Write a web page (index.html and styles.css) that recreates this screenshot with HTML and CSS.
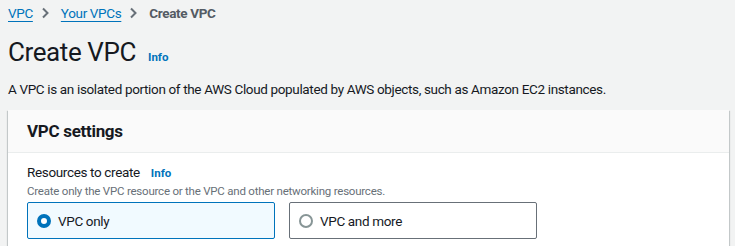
FILE: index.html
```html
<!DOCTYPE html>
<html>
<head>
<meta charset="utf-8">
<link rel="stylesheet" href="styles.css">
</head>
<body>
<nav class="crumbs">
  <a class="crumb-link" href="#">VPC</a>
  <svg class="chev" width="28" height="18" viewBox="0 0 28 18"><path d="M10 4.5l4.5 4.5-4.5 4.5" fill="none" stroke="#687078" stroke-width="2"/></svg>
  <a class="crumb-link" href="#">Your VPCs</a>
  <svg class="chev" width="28" height="18" viewBox="0 0 28 18"><path d="M10 4.5l4.5 4.5-4.5 4.5" fill="none" stroke="#687078" stroke-width="2"/></svg>
  <span class="crumb-current">Create VPC</span>
</nav>
<header class="page-head">
  <h1 class="title">Create VPC</h1>
  <a class="info" href="#">Info</a>
</header>
<p class="desc">A VPC is an isolated portion of the AWS Cloud populated by AWS objects, such as Amazon EC2 instances.</p>
<section class="panel">
  <div class="panel-head"><h2 class="panel-title">VPC settings</h2></div>
  <div class="panel-body">
    <div class="label-row"><span class="label">Resources to create</span><a class="info" href="#">Info</a></div>
    <div class="hint">Create only the VPC resource or the VPC and other networking resources.</div>
    <div class="tiles">
      <div class="tile tile-on"><span class="radio radio-on"></span><span>VPC only</span></div>
      <div class="tile"><span class="radio"></span><span>VPC and more</span></div>
    </div>
  </div>
</section>
</body>
</html>
```

FILE: styles.css
```css
html, body { margin: 0; padding: 0; }
body {
  background: #f2f3f3;
  font-family: Roboto, "Open Sans", sans-serif;
  color: #16191f;
  font-size: 13.5px;
  letter-spacing: -0.35px;
  padding: 0 6px 0 8px;
  overflow: hidden;
}
.crumbs {
  display: flex;
  align-items: center;
  height: 26px;
}
.crumb-link {
  color: #0073bb;
  text-decoration: underline;
  text-underline-offset: 3px;
}
.crumb-current { color: #545b64; font-weight: 700; }
.chev { flex: none; }
.page-head {
  display: flex;
  align-items: baseline;
  gap: 12px;
  margin-top: 10px;
  height: 32px;
}
.title {
  margin: 0;
  font-size: 26px;
  letter-spacing: -0.4px;
  font-weight: 400;
  line-height: 32px;
}
.info {
  color: #0073bb;
  font-weight: 700;
  font-size: 11.5px;
  letter-spacing: 0;
  text-decoration: none;
}
.desc {
  margin: 11px 0 0;
  line-height: 20px;
}
.panel {
  margin-top: 11px;
  background: #fff;
  box-shadow: 0 1px 1px 0 rgba(0,28,36,0.3), 1px 1px 1px 0 rgba(0,28,36,0.15), -1px 1px 1px 0 rgba(0,28,36,0.15);
}
.panel-head {
  background: #fafafa;
  border-bottom: 1px solid #eaeded;
  height: 42px;
  display: flex;
  align-items: center;
  padding: 0 19px;
}
.panel-title { margin: 0; font-size: 17px; letter-spacing: -0.3px; font-weight: 700; }
.panel-body { padding: 9px 19px 20px; }
.label-row { display: flex; align-items: baseline; gap: 11px; line-height: 20px; }
.hint { font-size: 11.5px; letter-spacing: -0.22px; color: #687078; line-height: 16px; }
.tiles { display: flex; gap: 14px; margin-top: 3px; }
.tile {
  box-sizing: border-box;
  width: 248px;
  height: 37px;
  border: 1px solid #687078;
  border-radius: 2px;
  display: flex;
  align-items: center;
  gap: 7px;
  padding: 0 9px;
}
.tile-on { background: #f1faff; border-color: #0073bb; }
.radio {
  box-sizing: border-box;
  width: 14px;
  height: 14px;
  border-radius: 50%;
  border: 2px solid #879596;
  background: #fff;
}
.radio.radio-on { border: 4px solid #0073bb; }
```
